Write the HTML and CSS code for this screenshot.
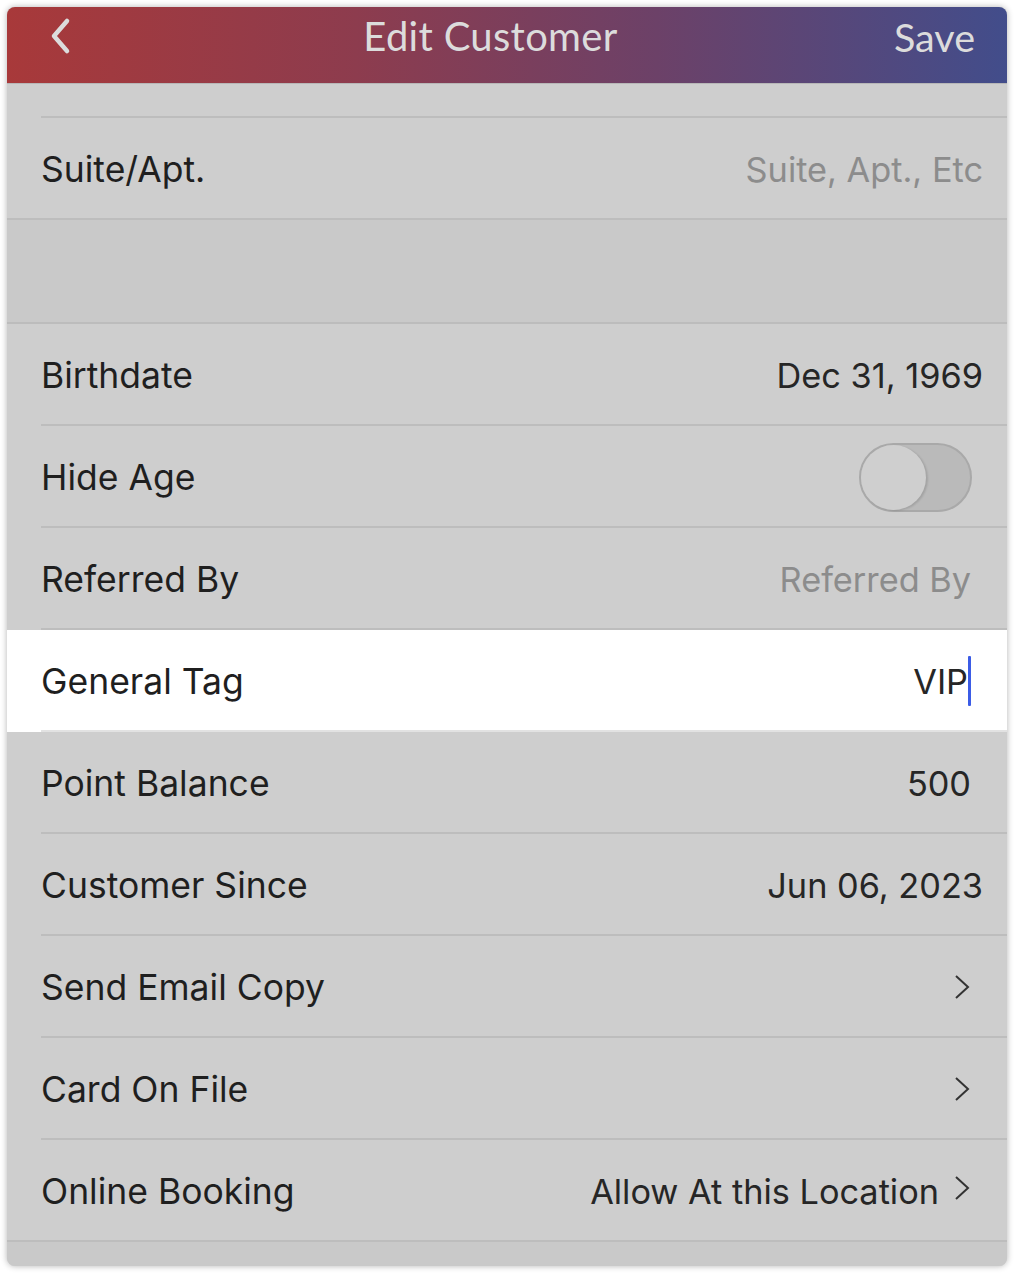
FILE: index.html
```html
<!DOCTYPE html>
<html>
<head>
<meta charset="utf-8">
<link rel="stylesheet" href="styles.css">
</head>
<body>
<div class="screen">
  <header class="nav">
    <svg class="back" width="30" height="40" viewBox="0 0 30 40"><path d="M22 5 L9 20 L22 35" fill="none" stroke="#dcdcdc" stroke-width="4.5" stroke-linecap="round" stroke-linejoin="round"/></svg>
    <div class="title">Edit Customer</div>
    <div class="save">Save</div>
  </header>
  <div class="top-space"></div>
  <div class="row full-line"><span class="label">Suite/Apt.</span><span class="value placeholder">Suite, Apt., Etc</span></div>
  <div class="gap"></div>
  <div class="row"><span class="label">Birthdate</span><span class="value">Dec 31, 1969</span></div>
  <div class="row"><span class="label">Hide Age</span><span class="toggle"><span class="knob"></span></span></div>
  <div class="row"><span class="label">Referred By</span><span class="value placeholder inset">Referred By</span></div>
  <div class="row active"><span class="label">General Tag</span><span class="value inset">VIP<span class="cursor"></span></span></div>
  <div class="row"><span class="label">Point Balance</span><span class="value inset">500</span></div>
  <div class="row"><span class="label">Customer Since</span><span class="value">Jun 06, 2023</span></div>
  <div class="row"><span class="label">Send Email Copy</span><span class="value inset"><svg class="chev" width="18" height="26" viewBox="0 0 18 26"><path d="M3 2 L15 13 L3 24" fill="none" stroke="#333" stroke-width="2"/></svg></span></div>
  <div class="row"><span class="label">Card On File</span><span class="value inset"><svg class="chev" width="18" height="26" viewBox="0 0 18 26"><path d="M3 2 L15 13 L3 24" fill="none" stroke="#333" stroke-width="2"/></svg></span></div>
  <div class="row full-line"><span class="label">Online Booking</span><span class="value inset">Allow At this Location<svg class="chev chev-gap" width="18" height="26" viewBox="0 0 18 26"><path d="M3 2 L15 13 L3 24" fill="none" stroke="#333" stroke-width="2"/></svg></span></div>
  <div class="bottom"></div>
</div>
</body>
</html>
```
FILE: styles.css
```css
* { box-sizing: border-box; }
html, body { margin: 0; padding: 0; background: #fff; }
body { padding: 7px 8px 7px 7px; font-family: Inter, "Noto Sans", sans-serif; }
.screen {
  width: 1000px;
  height: 1259px;
  border-radius: 8px;
  overflow: hidden;
  background: #cecece;
  box-shadow: 0 0 6px rgba(0,0,0,0.3);
  display: flex;
  flex-direction: column;
}
.nav {
  height: 77px;
  flex: none;
  background: linear-gradient(to right, #a8393a 0%, #8d3c4e 35%, #6c4168 65%, #424d8b 100%);
  border-bottom: 1px solid #b7b7b7;
  display: flex;
  align-items: center;
  padding: 0 32px 0 38px;
  color: #dcdcdc;
}
.back { flex: none; margin-top: -18px; }
.title {
  flex: 1;
  text-align: center;
  font-family: Lato, "Open Sans", sans-serif;
  font-size: 40px;
  padding-left: 12px;
  margin-top: -18px;
  letter-spacing: 0.3px;
}
.save {
  font-family: Lato, "Open Sans", sans-serif;
  font-size: 39.5px;
  margin-top: -18px;
}
.top-space {
  height: 34px;
  flex: none;
  margin-left: 34px;
  border-bottom: 2px solid #bdbdbd;
}
.row {
  height: 102px;
  flex: none;
  display: flex;
  align-items: center;
  justify-content: space-between;
  padding: 0 24px 0 34px;
  position: relative;
  font-size: 35.5px;
  color: #222;
}
.row::after {
  content: "";
  position: absolute;
  left: 34px;
  right: 0;
  bottom: 0;
  height: 2px;
  background: #bdbdbd;
}
.row.full-line::after { left: 0; }
.row.active { background: #fff; }
.row.active::after { background: #e2e2e2; }
.label { color: #1f1f1f; }
.value { color: #262626; display: flex; align-items: center; font-size: 34.3px; }
.value.inset { margin-right: 12px; }
.placeholder { color: #8c8c8c; }
.gap {
  height: 104px;
  flex: none;
  background: #c9c9c9;
  border-bottom: 2px solid #bcbcbc;
}
.toggle {
  width: 113px;
  height: 69px;
  margin-right: 11px;
  border-radius: 35px;
  background: #bababa;
  border: 2px solid #a9a9a9;
  position: relative;
}
.knob {
  position: absolute;
  left: 0;
  top: 0;
  width: 65px;
  height: 65px;
  border-radius: 50%;
  background: #cfcfcf;
  box-shadow: 2px 1px 2px rgba(0,0,0,0.12);
}
.cursor {
  display: inline-block;
  width: 3px;
  height: 50px;
  background: #3b5ce6;
  border-radius: 1px;
}
.chev { display: block; }
.chev-gap { margin-left: 14px; margin-top: -6px; }
.bottom { flex: 1; background: #c9c9c9; }
```
